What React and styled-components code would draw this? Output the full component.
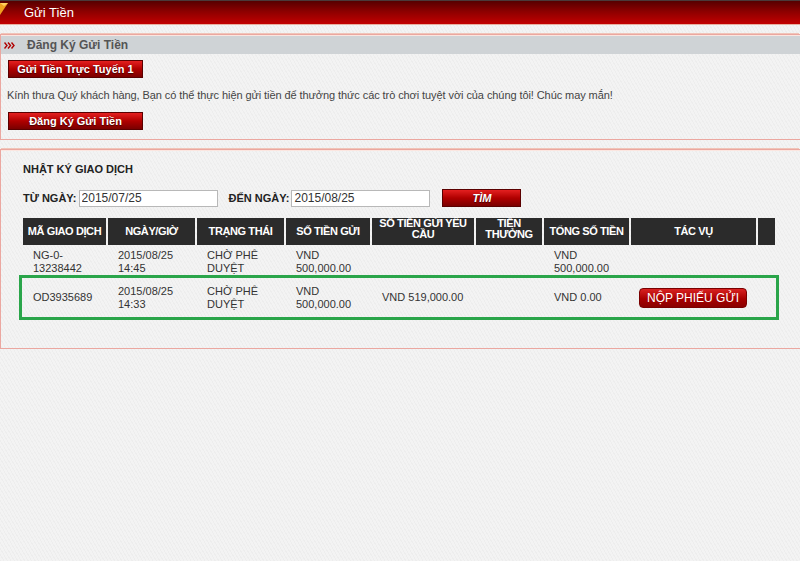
import React from "react"
import styled, { createGlobalStyle } from "styled-components"

const GlobalStyle = createGlobalStyle`
  html, body {
    margin: 0;
    padding: 0;
  }
  body {
    width: 800px;
    height: 561px;
    overflow: hidden;
    font-family: "Liberation Sans", Arial, sans-serif;
    background-color: #f3f3f3;
    background-image: repeating-linear-gradient(
      60deg,
      rgba(0, 0, 0, 0.025) 0px,
      rgba(0, 0, 0, 0.025) 1px,
      transparent 1px,
      transparent 3px
    );
  }
`

const Page = styled.div`
  display: flex;
  flex-direction: column;
`

const TopBar = styled.div`
  height: 23px;
  border-top: 1px solid #4a3a3a;
  background: linear-gradient(#560000, #8c0000 45%, #c20000);
  display: flex;
  align-items: center;
  gap: 16px;
  border-bottom: 1px solid #e8b0a0;

  > h1 {
    margin: 0;
    font-size: 13px;
    font-weight: normal;
    color: #fff;
  }
`

const Corner = styled.svg`
  width: 8px;
  height: 23px;
  flex: none;
`

const Box = styled.section`
  margin-top: ${(p) => p.$top}px;
  border: 1px solid #eba7a0;
  border-right: none;
  box-shadow: inset 0 1px 0 #fbe6e0, 0 -2px 0 -1px #f0c4b8;
`

const BandHeader = styled.div`
  height: 18px;
  margin-top: 1px;
  background: #cfd3d6;
  display: flex;
  align-items: center;
  padding-left: 3px;
  gap: 12px;

  > h2 {
    margin: 0;
    font-size: 12px;
    font-weight: bold;
    color: #555;
  }
`

const Arrows = styled.svg`
  width: 11px;
  height: 7px;
  flex: none;
`

const RedButton = styled.button`
  display: block;
  width: ${(p) => p.$w || 135}px;
  height: 18px;
  margin-left: ${(p) => p.$left || 0}px;
  padding: 0;
  border: 1px solid #5a0000;
  background: linear-gradient(#e42020, #b00000 50%, #7a0000);
  color: #fff;
  font-family: "Liberation Sans", Arial, sans-serif;
  font-size: 11px;
  font-weight: bold;
  font-style: ${(p) => (p.$italic ? "italic" : "normal")};
  text-shadow: 0 1px 1px #400000;
  cursor: pointer;
`

const Intro = styled.div`
  display: flex;
  flex-direction: column;
  padding: 6px 0 9px 6px;

  > p {
    margin: 11px 0 11px 0;
    font-size: 11px;
    letter-spacing: -0.08px;
    color: #444;
  }
`

const Journal = styled.div`
  padding: 13px 22px 30px 20px;
  display: flex;
  flex-direction: column;

  > h3 {
    margin: 0 0 0 2px;
    font-size: 11px;
    line-height: 13px;
    font-weight: bold;
    color: #222;
  }
`

const Filter = styled.div`
  display: flex;
  align-items: center;
  margin: 13px 0 9px 2px;

  > label {
    font-size: 11px;
    font-weight: bold;
    color: #222;
    margin-right: 2px;
  }
`

const DateInput = styled.input`
  width: 139px;
  height: 17px;
  box-sizing: border-box;
  border: 1px solid #b8b8b8;
  background: #fff;
  padding: 0 2px;
  font-family: "Liberation Sans", Arial, sans-serif;
  font-size: 12px;
  color: #333;
  margin-right: ${(p) => p.$after}px;
`

const Table = styled.table`
  border-collapse: separate;
  border-spacing: 2px;
  table-layout: fixed;
  width: 756px;
`

const Th = styled.th`
  width: ${(p) => p.$w}px;
  height: 27px;
  padding: 0 2px;
  background: #2b2b2b;
  color: #fff;
  font-size: 11px;
  line-height: 11px;
  letter-spacing: -0.4px;
  font-weight: bold;
  text-align: center;
  vertical-align: ${(p) => (p.$top ? "top" : "middle")};
  box-sizing: border-box;
`

const Row = styled.tr`
  outline: ${(p) => (p.$marked ? "3px solid #2aa54a" : "none")};
  outline-offset: 1px;
`

const Td = styled.td`
  height: ${(p) => p.$h}px;
  padding: 0 0 0 10px;
  font-size: 11px;
  line-height: 13px;
  color: #333;
  white-space: pre-line;
  vertical-align: middle;
  box-sizing: border-box;
`

const SubmitButton = styled.button`
  width: 108px;
  height: 20px;
  margin-left: -2px;
  padding: 0;
  border: 1px solid #7a0000;
  border-radius: 4px;
  background: linear-gradient(#d82222, #a80000 55%, #8a0000);
  color: #fff;
  font-family: "Liberation Sans", Arial, sans-serif;
  font-size: 12px;
  cursor: pointer;
`

const columns = [
  { label: "MÃ GIAO DỊCH", w: 83 },
  { label: "NGÀY/GIỜ", w: 87 },
  { label: "TRẠNG THÁI", w: 87 },
  { label: "SỐ TIỀN GỬI", w: 84 },
  { label: "SỐ TIỀN GỬI YÊU CẦU", w: 102, top: true },
  { label: "TIỀN THƯỞNG", w: 66, top: true },
  { label: "TỔNG SỐ TIỀN", w: 85 },
  { label: "TÁC VỤ", w: 125 },
  { label: "", w: 17 },
]

const rows = [
  {
    id: "NG-0-\n13238442",
    time: "2015/08/25\n14:45",
    status: "CHỜ PHÊ\nDUYỆT",
    amount: "VND\n500,000.00",
    requested: "",
    bonus: "",
    total: "VND\n500,000.00",
    action: false,
    h: 30,
  },
  {
    id: "OD3935689",
    time: "2015/08/25\n14:33",
    status: "CHỜ PHÊ\nDUYỆT",
    amount: "VND\n500,000.00",
    requested: "VND 519,000.00",
    bonus: "",
    total: "VND 0.00",
    action: true,
    h: 37,
    marked: true,
  },
]

const App = () => {
  return (
    <Page>
      <GlobalStyle />
      <TopBar>
        <Corner viewBox="0 0 8 23">
          <polygon points="0,2 8,2 0,14" fill="#f0a020" />
          <polygon points="0,2 8,2 4,5" fill="#ffd060" />
        </Corner>
        <h1>Gửi Tiền</h1>
      </TopBar>

      <Box $top={9}>
        <BandHeader>
          <Arrows viewBox="0 0 11 7">
            <path
              d="M0.5 0.5 L3 3.5 L0.5 6.5 M4 0.5 L6.5 3.5 L4 6.5 M7.5 0.5 L10 3.5 L7.5 6.5"
              fill="none"
              stroke="#b00000"
              strokeWidth="1.4"
            />
          </Arrows>
          <h2>Đăng Ký Gửi Tiền</h2>
        </BandHeader>
        <Intro>
          <RedButton $left={1}>Gửi Tiền Trực Tuyến 1</RedButton>
          <p>
            Kính thưa Quý khách hàng, Bạn có thể thực hiện gửi tiền để thưởng
            thức các trò chơi tuyệt vời của chúng tôi! Chúc may mắn!
          </p>
          <RedButton $left={1}>Đăng Ký Gửi Tiền</RedButton>
        </Intro>
      </Box>

      <Box $top={9}>
        <Journal>
          <h3>NHẬT KÝ GIAO DỊCH</h3>
          <Filter>
            <label>TỪ NGÀY:</label>
            <DateInput defaultValue="2015/07/25" $after={11} />
            <label>ĐẾN NGÀY:</label>
            <DateInput defaultValue="2015/08/25" $after={12} />
            <RedButton $w={79} $italic>
              TÌM
            </RedButton>
          </Filter>

          <Table>
            <thead>
              <tr>
                {columns.map((c, i) => (
                  <Th key={i} $w={c.w} $top={c.top}>
                    {c.label}
                  </Th>
                ))}
              </tr>
            </thead>
            <tbody>
              {rows.map((r) => (
                <Row key={r.id} $marked={r.marked}>
                  <Td $h={r.h}>{r.id}</Td>
                  <Td $h={r.h}>{r.time}</Td>
                  <Td $h={r.h}>{r.status}</Td>
                  <Td $h={r.h}>{r.amount}</Td>
                  <Td $h={r.h}>{r.requested}</Td>
                  <Td $h={r.h}>{r.bonus}</Td>
                  <Td $h={r.h}>{r.total}</Td>
                  <Td $h={r.h}>
                    {r.action ? <SubmitButton>NỘP PHIẾU GỬI</SubmitButton> : null}
                  </Td>
                  <Td $h={r.h} />
                </Row>
              ))}
            </tbody>
          </Table>
        </Journal>
      </Box>
    </Page>
  )
}

export default App
